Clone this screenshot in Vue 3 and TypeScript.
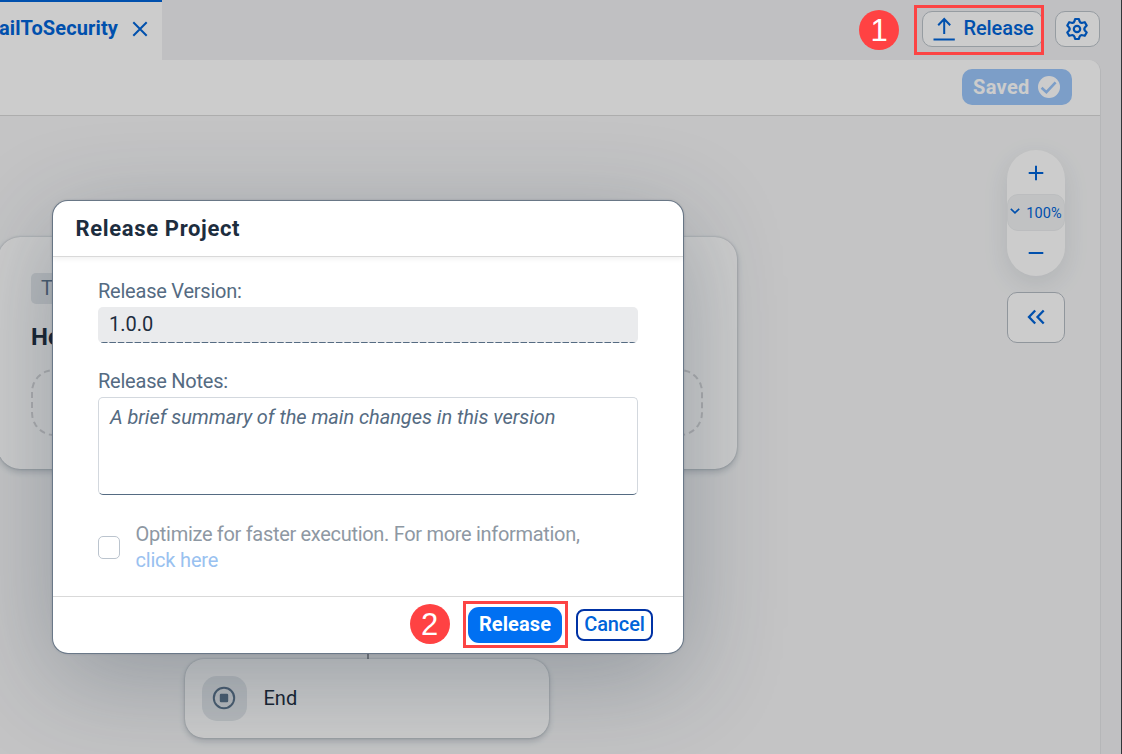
<script setup lang="ts">
import { ref } from 'vue'

const version = ref<string>('1.0.0')
const notes = ref<string>('')
const optimize = ref<boolean>(false)
const zoomLevel = ref<number>(100)
</script>

<template>
  <div class="app">
    <header class="header">
      <div class="tab">
        <span class="tab-name">ailToSecurity</span>
        <svg class="close" width="16" height="16" viewBox="0 0 16 16"><path d="M1.3 1.3L14.7 14.7M14.7 1.3L1.3 14.7" /></svg>
      </div>
      <div class="header-actions">
        <button class="btn btn-release">
          <svg width="24" height="24" viewBox="0 0 24 24"><path d="M12.2 17V2.2M6.2 8.2L12.2 2L18.2 8.2M1.5 22.4H22.8" /></svg>
          <span>Release</span>
        </button>
        <button class="btn btn-gear">
          <svg width="24" height="24" viewBox="0 0 24 24">
            <path d="M10.1 2H13.9L14.5 4.2Q15.2 6.4 17.5 5.8L19.8 5.2L21.7 8.5L20.1 10.2Q18.5 12 20.1 13.8L21.7 15.5L19.8 18.8L17.5 18.2Q15.2 17.6 14.5 19.8L13.9 22H10.1L9.5 19.8Q8.8 17.6 6.5 18.2L4.2 18.8L2.3 15.5L3.9 13.8Q5.5 12 3.9 10.2L2.3 8.5L4.2 5.2L6.5 5.8Q8.8 6.4 9.5 4.2Z" />
            <circle cx="12" cy="12" r="3.2" />
          </svg>
        </button>
      </div>
    </header>

    <main class="panel">
      <div class="toolbar">
        <div class="saved">
          <span>Saved</span>
          <svg width="22" height="22" viewBox="0 0 22 22"><circle cx="11" cy="11" r="11" /><path d="M3.6 11.8L8.4 16.2L17.6 6.4" /></svg>
        </div>
      </div>
      <div class="canvas">
        <section class="card trigger">
          <span class="tag">Tr</span>
          <h2>Ho</h2>
          <div class="drop"></div>
        </section>
        <div class="connector"></div>
        <section class="card end">
          <div class="end-icon">
            <svg width="24" height="24" viewBox="0 0 24 24"><circle cx="12" cy="12" r="10.2" /><rect x="7.8" y="7.8" width="8.4" height="8.4" rx="1.2" /></svg>
          </div>
          <span>End</span>
        </section>
        <aside class="tools">
          <div class="zoom">
            <button class="zoom-btn"><svg width="16" height="16" viewBox="0 0 16 16"><path d="M8 .7V15.3M.7 8H15.3" /></svg></button>
            <div class="level">
              <svg width="10" height="6" viewBox="0 0 10 6"><path d="M.8 .8L5 4.8L9.2 .8" /></svg>
              <span>{{ zoomLevel }}%</span>
            </div>
            <button class="zoom-btn"><svg width="16" height="16" viewBox="0 0 16 16"><path d="M.7 8H15.3" /></svg></button>
          </div>
          <button class="collapse"><svg width="18" height="16" viewBox="0 0 18 16"><path d="M8.2 1.5L2 8L8.2 14.5M16.7 1.5L10.5 8L16.7 14.5" /></svg></button>
        </aside>
      </div>
    </main>

    <div class="overlay"></div>

    <div class="dialog" role="dialog">
      <div class="dialog-head">Release Project</div>
      <div class="dialog-body">
        <label class="label label-version">Release Version:</label>
        <div class="input">{{ version }}</div>
        <label class="label label-notes">Release Notes:</label>
        <textarea v-model="notes" placeholder="A brief summary of the main changes in this version"></textarea>
        <div class="option">
          <span class="check" :aria-checked="optimize" role="checkbox"></span>
          <p><span class="line">Optimize for faster execution. For more information,</span><br /><a>click here</a></p>
        </div>
      </div>
      <div class="dialog-foot">
        <button class="primary">Release</button>
        <button class="cancel">Cancel</button>
      </div>
    </div>

    <div class="frame frame-one"></div>
    <div class="frame frame-two"></div>
    <div class="badge badge-one">1</div>
    <div class="badge badge-two">2</div>
    <div class="edge"></div>
  </div>
</template>

<style>
body { margin: 0; }
</style>

<style scoped>
* { box-sizing: border-box; }
button { font: inherit; padding: 0; margin: 0; }
svg { display: block; flex: none; fill: none; stroke: #0064d9; stroke-width: 2; }
.app {
  position: relative;
  width: 1122px;
  height: 754px;
  overflow: hidden;
  background: #f0f1f3;
  color: #1d2d3e;
  font-family: Roboto, "Noto Sans", sans-serif;
  font-size: 20px;
  white-space: nowrap;
}
.header { display: flex; justify-content: space-between; height: 60px; }
.tab {
  display: flex;
  align-items: center;
  justify-content: flex-end;
  gap: 14px;
  width: 162px;
  padding: 0 14px 4px 0;
  background: #fff;
  border-top: 2px solid #0064d9;
  color: #0064d9;
  font-weight: 700;
}
.tab-name { letter-spacing: 0.12px; margin-top: -3px; }
.close { margin-top: 0; }
.header-actions { display: flex; gap: 12px; padding: 11px 22px 0 0; }
.btn {
  display: flex;
  align-items: center;
  height: 36px;
  background: #fff;
  border: 1px solid #bcc3ca;
  border-radius: 10px;
  color: #0064d9;
  font-weight: 500;
}
.btn-release { width: 121px; padding-left: 9px; gap: 7.5px; }
.btn-release span { margin-top: -2px; letter-spacing: -0.1px; }
.btn-gear { width: 45px; padding-left: 9px; }
.btn-gear svg { stroke-width: 2.2; stroke-linejoin: round; }
.panel {
  width: 1101px;
  height: 694px;
  background: #f5f6f7;
  border-right: 1px solid #e3e4e6;
  border-top-right-radius: 12px;
  overflow: hidden;
}
.toolbar {
  display: flex;
  align-items: center;
  justify-content: flex-end;
  height: 56px;
  padding: 0 28px 2px 0;
  background: #fff;
  border-bottom: 1px solid #d9d9d9;
}
.saved {
  display: flex;
  align-items: center;
  gap: 8px;
  width: 110px;
  height: 36px;
  padding-left: 11px;
  border-radius: 10px;
  background: #9bc6fb;
  color: #fff;
  font-weight: 700;
  letter-spacing: 0.35px;
}
.saved svg { fill: #fff; stroke: none; }
.saved path { fill: none; stroke: #9bc6fb; stroke-width: 2.6; }
.canvas { position: relative; height: 638px; }
.card {
  position: absolute;
  background: #fff;
  box-shadow: 0 0 2px rgba(34, 53, 72, 0.3), 0 3px 6px rgba(34, 53, 72, 0.22);
}
.trigger { left: -2px; top: 121px; width: 739px; height: 232px; padding: 36px 33px; border-radius: 22px; }
.tag {
  display: block;
  width: 96px;
  height: 31px;
  padding-left: 10px;
  line-height: 31px;
  border-radius: 5px;
  background: #e5e9ed;
  color: #5b738b;
  letter-spacing: -0.8px;
}
h2 { margin: 18px 0 0; font-size: 24px; line-height: 30px; font-weight: 700; }
.drop { width: 672px; height: 67px; margin-top: 17px; border: 2px dashed #d7d8da; border-radius: 23px; }
.connector { position: absolute; left: 366.5px; top: 353px; width: 2px; height: 190px; background: #9a9da1; }
.end {
  left: 185px;
  top: 543px;
  width: 364px;
  height: 79px;
  display: flex;
  align-items: center;
  gap: 16.5px;
  padding-left: 17px;
  border-radius: 19px;
}
.end-icon {
  display: flex;
  align-items: center;
  padding-left: 10px;
  width: 45px;
  height: 45px;
  border-radius: 15px;
  background: #e5e9ed;
}
.end > span { margin-top: -1px; }
.end-icon svg { stroke: #5b738b; margin-top: -1px; }
.end-icon rect { fill: #5b738b; stroke: none; }
.tools { position: absolute; left: 1007px; top: 34px; width: 58px; }
.zoom {
  height: 126px;
  border-radius: 29px;
  background: #fff;
  box-shadow: 0 8px 26px rgba(34, 53, 72, 0.11);
}
.zoom-btn { display: grid; place-items: center; width: 58px; height: 43px; border: 0; background: none; }
.zoom-btn:first-child { height: 44px; padding-top: 2px; }
.level {
  display: flex;
  align-items: center;
  justify-content: center;
  gap: 6px;
  height: 37px;
  border: 1px solid #ebedef;
  border-radius: 11px;
  background: #f2f3f4;
  color: #0064d9;
  font-size: 14.5px;
}
.level svg { stroke-width: 1.6; margin-top: -4px; }
.level span { margin-top: 2px; letter-spacing: 0.1px; }
.collapse {
  display: grid;
  place-items: center;
  width: 58px;
  height: 51px;
  margin-top: 16px;
  padding-bottom: 1px;
  border: 1px solid #b5bcc4;
  border-radius: 10px;
  background: #fff;
}
.collapse svg { stroke-width: 2.3; }
.overlay { position: absolute; inset: 0; background: rgba(0, 0, 0, 0.2); }
.dialog {
  position: absolute;
  left: 53px;
  top: 201px;
  width: 630px;
  height: 452px;
  border-radius: 15px;
  background: #fff;
  box-shadow: 0 0 0 1px #6a7888, 0 0 3px rgba(34, 53, 72, 0.4), 0 25px 100px rgba(34, 53, 72, 0.3);
}
.dialog-head {
  height: 56px;
  padding-left: 22.5px;
  border-bottom: 1px solid #d9d9d9;
  border-radius: 15px 15px 0 0;
  box-shadow: 0 2px 5px rgba(0, 0, 0, 0.06);
  font-size: 22px;
  font-weight: 700;
  line-height: 55px;
  letter-spacing: 0.65px;
}
.dialog-body { height: 339px; padding: 20px 45px 0; }
.label { display: block; height: 30px; line-height: 28px; color: #556b82; letter-spacing: -0.23px; }
.input {
  height: 36px;
  padding-left: 11px;
  line-height: 35px;
  border-radius: 5px;
  background: linear-gradient(90deg, #556b82 75%, transparent 75%) 3px 35px / 8.4px 1px repeat-x #eaebed;
}
.label-notes { margin-top: 24px; }
textarea {
  display: block;
  width: 540px;
  height: 98px;
  margin: 0;
  padding: 7px 11px;
  border: 1px solid #d3d8de;
  border-bottom-color: #556b82;
  border-radius: 5px;
  background: #fff;
  font: 20px/24px Roboto, "Noto Sans", sans-serif;
  resize: none;
  outline: 0;
}
textarea::placeholder { color: #556b82; font-style: italic; opacity: 1; letter-spacing: -0.06px; }
.option { display: flex; align-items: center; gap: 15.5px; margin-top: 26px; }
.check { width: 22px; height: 23px; border: 1px solid #bbc4ce; border-radius: 5px; }
.option p { margin: 0; line-height: 26px; color: #8e98a3; letter-spacing: -0.31px; }
.option a { color: #99c1f0; letter-spacing: -0.2px; }
.dialog-foot {
  display: flex;
  align-items: center;
  justify-content: flex-end;
  gap: 14px;
  height: 57px;
  padding: 0 30px 0 0;
  border-top: 1px solid #d9d9d9;
}
.primary { width: 94px; height: 36px; border: 0; border-radius: 11px; background: #0070f2; color: #fff; font-weight: 700; padding-bottom: 2px; letter-spacing: 0.1px; }
.cancel { width: 77px; height: 32px; border: 2px solid #0032a5; border-radius: 8px; background: #fff; color: #0064d9; font-weight: 500; padding-bottom: 2px; letter-spacing: -0.15px; }
.frame { position: absolute; border: 3px solid #fc4444; }
.frame-one { left: 914px; top: 5px; width: 130px; height: 50px; }
.frame-two { left: 463px; top: 601px; width: 105px; height: 47px; }
.badge {
  position: absolute;
  width: 40px;
  height: 40px;
  border-radius: 50%;
  background: #ff4243;
  color: #fff;
  font: 31px/42px "Liberation Sans", Arial, sans-serif;
  text-align: center;
}
.badge-one { left: 859px; top: 10px; }
.badge-two { left: 410px; top: 604px; padding-right: 1px; }
.edge { position: absolute; right: 0; top: 0; width: 1px; height: 754px; background: #33363a; }
</style>
